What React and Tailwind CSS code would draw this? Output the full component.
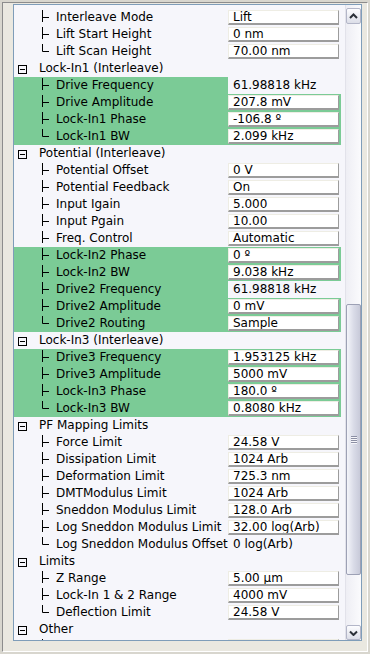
import React from 'react';

const ROWS = [
  { l: 'Interleave Mode', v: 'Lift', box: true },
  { l: 'Lift Start Height', v: '0 nm', box: true },
  { l: 'Lift Scan Height', v: '70.00 nm', box: true, last: true },
  { group: 'Lock-In1 (Interleave)' },
  { l: 'Drive Frequency', v: '61.98818 kHz', g: true },
  { l: 'Drive Amplitude', v: '207.8 mV', box: true, g: true },
  { l: 'Lock-In1 Phase', v: '-106.8 º', box: true, g: true },
  { l: 'Lock-In1 BW', v: '2.099 kHz', box: true, g: true, last: true },
  { group: 'Potential (Interleave)' },
  { l: 'Potential Offset', v: '0 V', box: true },
  { l: 'Potential Feedback', v: 'On', box: true },
  { l: 'Input Igain', v: '5.000', box: true },
  { l: 'Input Pgain', v: '10.00', box: true },
  { l: 'Freq. Control', v: 'Automatic', box: true },
  { l: 'Lock-In2 Phase', v: '0 º', box: true, g: true },
  { l: 'Lock-In2 BW', v: '9.038 kHz', box: true, g: true },
  { l: 'Drive2 Frequency', v: '61.98818 kHz', g: true },
  { l: 'Drive2 Amplitude', v: '0 mV', box: true, g: true },
  { l: 'Drive2 Routing', v: 'Sample', box: true, g: true, last: true },
  { group: 'Lock-In3 (Interleave)' },
  { l: 'Drive3 Frequency', v: '1.953125 kHz', box: true, g: true },
  { l: 'Drive3 Amplitude', v: '5000 mV', box: true, g: true },
  { l: 'Lock-In3 Phase', v: '180.0 º', box: true, g: true },
  { l: 'Lock-In3 BW', v: '0.8080 kHz', box: true, g: true, last: true },
  { group: 'PF Mapping Limits' },
  { l: 'Force Limit', v: '24.58 V', box: true },
  { l: 'Dissipation Limit', v: '1024 Arb', box: true },
  { l: 'Deformation Limit', v: '725.3 nm', box: true },
  { l: 'DMTModulus Limit', v: '1024 Arb', box: true },
  { l: 'Sneddon Modulus Limit', v: '128.0 Arb', box: true },
  { l: 'Log Sneddon Modulus Limit', v: '32.00 log(Arb)', box: true },
  { l: 'Log Sneddon Modulus Offset', v: '0 log(Arb)', last: true },
  { group: 'Limits' },
  { l: 'Z Range', v: '5.00 µm', box: true },
  { l: 'Lock-In 1 & 2 Range', v: '4000 mV', box: true },
  { l: 'Deflection Limit', v: '24.58 V', box: true, last: true },
  { group: 'Other' },
  { l: 'LP Deflection', v: 'Enabled', box: true },
];

function Connector({ last }) {
  return (
    <svg width="10" height="17" className="block shrink-0 ml-[27px]">
      {last ? (
        <path d="M1.5 1V8.5H8" stroke="#000" strokeWidth="1" fill="none" />
      ) : (
        <path d="M1.5 1V13M1 8.5H8" stroke="#000" strokeWidth="1" fill="none" />
      )}
    </svg>
  );
}

function Row({ r }) {
  if (r.group) {
    return (
      <div className="h-[17px] flex items-start">
        <svg width="9" height="17" className="block shrink-0 ml-[4px]">
          <rect x="0.5" y="5.5" width="8" height="8" stroke="#000" fill="none" />
          <path d="M2 9.5H7" stroke="#000" />
        </svg>
        <span className="ml-[12px] whitespace-nowrap leading-[17px]">{r.group}</span>
      </div>
    );
  }
  return (
    <div className="h-[17px] flex">
      <div className={`w-[214px] shrink-0 flex items-start ${r.g ? 'bg-[#7bcb96]' : ''}`}>
        <Connector last={r.last} />
        <span className="ml-[5px] whitespace-nowrap leading-[17px]">{r.l}</span>
      </div>
      {r.box ? (
        <div className={`flex-1 pt-[1px] pr-[2px] ${r.g ? 'bg-[#7bcb96]' : ''}`}>
          <div className="h-[15px] bg-white border-t border-l border-t-[#eeede4] border-l-[#eeede4] border-r border-r-[#9c9c9c] border-b-2 border-b-[#9c9c9c] pl-[4px] leading-[13px] whitespace-nowrap overflow-hidden">
            {r.v}
          </div>
        </div>
      ) : (
        <div className="flex-1 pl-[5px] leading-[17px] whitespace-nowrap">{r.v}</div>
      )}
    </div>
  );
}

function Scrollbar() {
  return (
    <div className="w-[16px] shrink-0 border-l border-l-[#e2e2ea] bg-gradient-to-r from-[#eeeef4] to-[#fbfbfd] flex flex-col">
      <div className="mt-[3px] h-[16px] rounded-[2px] border border-[#b3b6c8] bg-gradient-to-b from-[#fdfdff] to-[#dcdee8] flex items-center justify-center">
        <svg width="9" height="6" className="block">
          <path d="M1 5L4.5 1.5L8 5" stroke="#2b3038" strokeWidth="2" fill="none" />
        </svg>
      </div>
      <div className="flex-1">
        <div className="mt-[280px] h-[271px] rounded-[2px] border border-[#9da1b5] bg-gradient-to-r from-[#f4f5fa] via-[#dadce8] to-[#c8cad9] flex items-center justify-center">
          <div className="w-[6px] flex flex-col">
            <div className="h-[1px] bg-[#8c8fa4]" />
            <div className="h-[1px] bg-[#f6f6fa]" />
            <div className="h-[1px] bg-[#8c8fa4]" />
            <div className="h-[1px] bg-[#f6f6fa]" />
            <div className="h-[1px] bg-[#8c8fa4]" />
            <div className="h-[1px] bg-[#f6f6fa]" />
            <div className="h-[1px] bg-[#8c8fa4]" />
            <div className="h-[1px] bg-[#f6f6fa]" />
          </div>
        </div>
      </div>
      <div className="h-[15px] rounded-[2px] border border-[#b3b6c8] bg-gradient-to-b from-[#fdfdff] to-[#dcdee8] flex items-center justify-center">
        <svg width="9" height="6" className="block">
          <path d="M1 1.5L4.5 5L8 1.5" stroke="#2b3038" strokeWidth="2" fill="none" />
        </svg>
      </div>
    </div>
  );
}

export default function App() {
  return (
    <div className="w-[370px] h-[654px] bg-[#d8d6ce] p-[2px] font-['DejaVu_Sans',sans-serif] text-[12px] text-black overflow-hidden">
      <div className="h-full border border-t-[#8c8c8c] border-l-[#8c8c8c] border-r-white border-b-white">
        <div className="h-full bg-[#eae8e0] pl-[10px] pt-[1px] pr-[5px] pb-[10px]">
          <div className="h-full border border-[#7f9db9] flex bg-[#f6f6fb]">
            <div className="flex-1 min-w-0 overflow-hidden pt-[4px] pr-[4px]">
              {ROWS.map((r, i) => (
                <Row key={i} r={r} />
              ))}
            </div>
            <Scrollbar />
          </div>
        </div>
      </div>
    </div>
  );
}
